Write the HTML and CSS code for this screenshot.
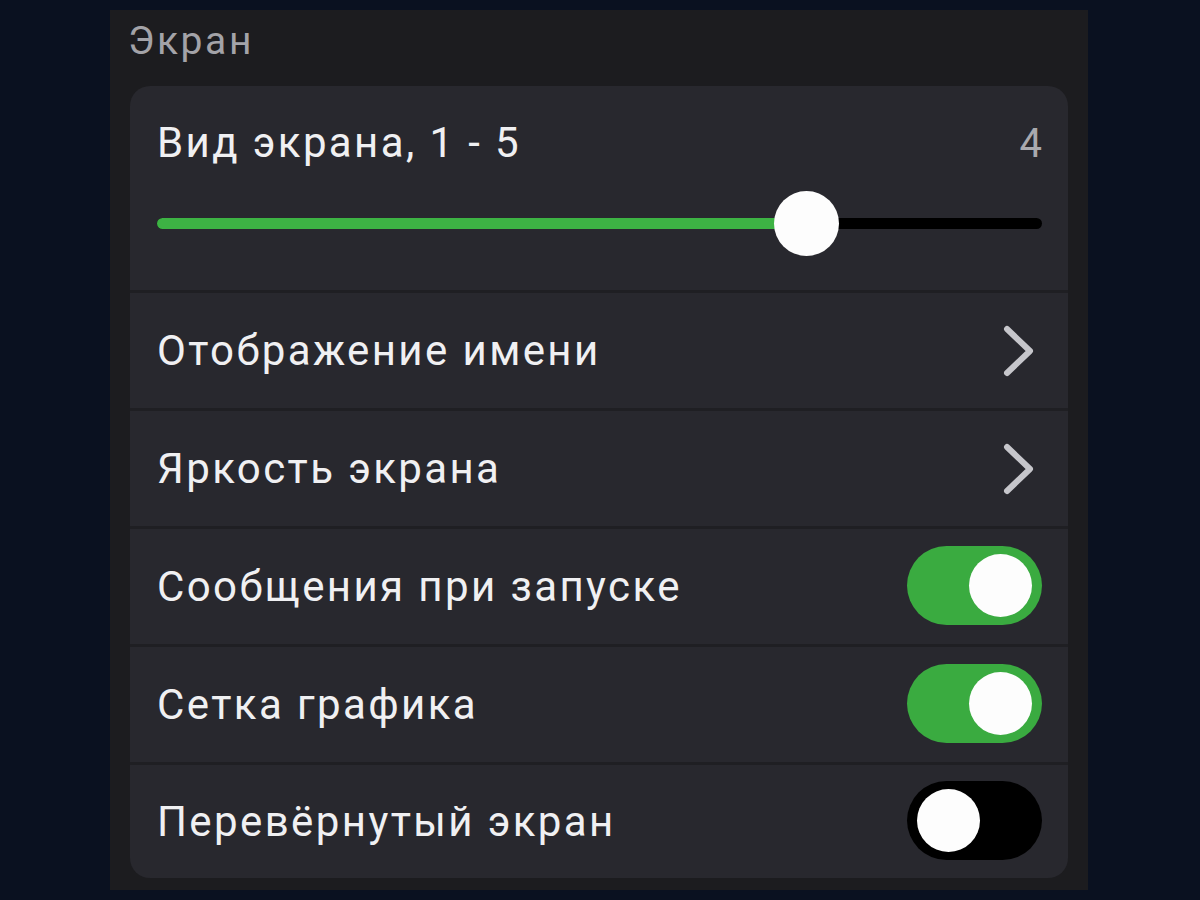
FILE: index.html
```html
<!DOCTYPE html>
<html lang="ru">
<head>
<meta charset="utf-8">
<title>Экран</title>
<link rel="stylesheet" href="styles.css">
</head>
<body>
<div class="panel">
  <div class="section-title">Экран</div>
  <div class="card">
    <div class="row slider-row">
      <div class="slider-head">
        <span class="label">Вид экрана, 1 - 5</span>
        <span class="value">4</span>
      </div>
      <div class="slider">
        <div class="track">
          <div class="fill" style="width: 73.4%"></div>
        </div>
        <div class="thumb" style="left: 73.4%"></div>
      </div>
    </div>
    <div class="row">
      <span class="label">Отображение имени</span>
      <svg class="chevron" width="34" height="54" viewBox="0 0 34 54"><polyline points="5,5 28,27 5,49" fill="none" stroke="#c6c6cb" stroke-width="6" stroke-linecap="round" stroke-linejoin="round"/></svg>
    </div>
    <div class="row">
      <span class="label">Яркость экрана</span>
      <svg class="chevron" width="34" height="54" viewBox="0 0 34 54"><polyline points="5,5 28,27 5,49" fill="none" stroke="#c6c6cb" stroke-width="6" stroke-linecap="round" stroke-linejoin="round"/></svg>
    </div>
    <div class="row">
      <span class="label">Сообщения при запуске</span>
      <div class="toggle on"><div class="knob"></div></div>
    </div>
    <div class="row">
      <span class="label">Сетка графика</span>
      <div class="toggle on"><div class="knob"></div></div>
    </div>
    <div class="row last">
      <span class="label">Перевёрнутый экран</span>
      <div class="toggle"><div class="knob"></div></div>
    </div>
  </div>
</div>
</body>
</html>
```

FILE: styles.css
```css
html, body {
  margin: 0;
  padding: 0;
}
body {
  background: #0a1120;
  width: 1200px;
  height: 900px;
  overflow: hidden;
  font-family: Roboto, "Noto Sans", "DejaVu Sans", sans-serif;
}
.panel {
  margin: 10px 0 0 110px;
  width: 978px;
  height: 880px;
  box-sizing: border-box;
  padding: 0 20px;
  background: #1c1c1f;
}
.section-title {
  height: 76px;
  box-sizing: border-box;
  padding-top: 9px;
  font-size: 39px;
  line-height: 44px;
  letter-spacing: 2.6px;
  margin-left: -2px;
  color: #a3a3a8;
}
.card {
  background: #28282e;
  border-radius: 20px;
  overflow: hidden;
}
.row {
  height: 118px;
  box-sizing: border-box;
  padding: 0 26px 0 27px;
  display: flex;
  align-items: center;
  justify-content: space-between;
  border-top: 3px solid #1f1f23;
}
.row.last {
  height: 116px;
}
.label {
  font-size: 42px;
  color: #f0f0f2;
  letter-spacing: 2.4px;
}
.slider-row {
  height: 204px;
  border-top: none;
  display: block;
  padding-top: 27px;
}
.slider-head {
  display: flex;
  justify-content: space-between;
  align-items: baseline;
  line-height: 60px;
}
.value {
  font-size: 40px;
  color: #a9a9ae;
}
.slider {
  position: relative;
  margin-top: 44px;
  height: 11px;
}
.track {
  height: 11px;
  border-radius: 6px;
  background: #000;
  overflow: hidden;
}
.fill {
  height: 100%;
  background: #3db344;
}
.thumb {
  position: absolute;
  top: 50%;
  width: 65px;
  height: 65px;
  margin: -32.5px 0 0 -32.5px;
  border-radius: 50%;
  background: #fdfdfd;
}
.chevron {
  display: block;
  margin-right: 6px;
}
.toggle {
  width: 135px;
  height: 79px;
  margin-top: -3px;
  border-radius: 40px;
  background: #000;
  box-sizing: border-box;
  padding: 8px 10px;
  display: flex;
  justify-content: flex-start;
  align-items: center;
}
.toggle.on {
  background: #3aab40;
  justify-content: flex-end;
}
.knob {
  width: 63px;
  height: 63px;
  border-radius: 50%;
  background: #fdfdfd;
}
```
